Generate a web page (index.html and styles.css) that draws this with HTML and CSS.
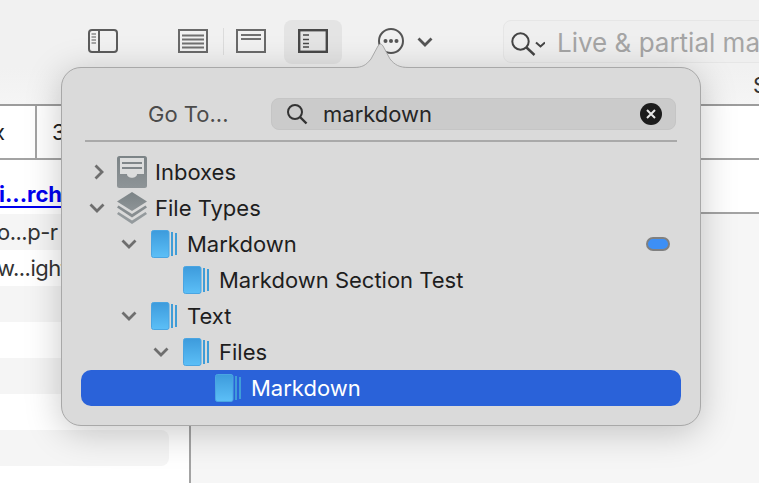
FILE: index.html
```html
<!DOCTYPE html>
<html lang="en">
<head>
    <meta charset="UTF-8">
    <title>Go To</title>
    <link rel="stylesheet" href="styles.css">
</head>
<body>
    <svg class="defs" width="0" height="0">
        <defs>
            <linearGradient id="blue" x1="0" y1="0" x2="0" y2="1">
                <stop offset="0" stop-color="#3d9bdc"/>
                <stop offset="1" stop-color="#5cbff7"/>
            </linearGradient>
            <linearGradient id="slate" x1="0" y1="0" x2="0" y2="1">
                <stop offset="0" stop-color="#7b8386"/>
                <stop offset="1" stop-color="#8e9497"/>
            </linearGradient>
            <symbol id="folder" viewBox="0 0 26 28">
                <rect x="0.5" y="0.5" width="17.5" height="27" rx="2" fill="url(#blue)" stroke="#4aa5e2"/>
                <rect x="20" y="2" width="2" height="24" fill="#3f9dd8"/>
                <rect x="24" y="3" width="2" height="22" fill="#3f9dd8"/>
            </symbol>
            <symbol id="chevron" viewBox="0 0 16 10">
                <path d="M1.5 1.5 L8 8 L14.5 1.5" fill="none" stroke="currentColor" stroke-width="2.8"/>
            </symbol>
        </defs>
    </svg>

    <header class="toolbar">
        <svg class="tool tool-sidebar" width="30" height="24" viewBox="0 0 30 24">
            <rect x="1" y="1" width="28" height="22" rx="3" fill="none" stroke="#5c5c5c" stroke-width="2"/>
            <path d="M11 1 V23" stroke="#5c5c5c" stroke-width="2"/>
            <path d="M3.5 5 H8 M3.5 8 H8 M3.5 11 H8 M3.5 14 H8" stroke="#8a8a8a" stroke-width="1.5"/>
        </svg>
        <svg class="tool tool-lines" width="30" height="24" viewBox="0 0 30 24">
            <rect x="1" y="1" width="28" height="22" fill="none" stroke="#6a6a6a" stroke-width="2"/>
            <path d="M4 6.5 H26 M4 10.5 H26 M4 14.5 H26 M4 18.5 H26" stroke="#707070" stroke-width="1.8"/>
        </svg>
        <span class="tool-sep"></span>
        <svg class="tool tool-preview" width="30" height="24" viewBox="0 0 30 24">
            <rect x="1" y="1" width="28" height="22" fill="none" stroke="#6a6a6a" stroke-width="2"/>
            <path d="M5 6 H25 M5 10 H25" stroke="#707070" stroke-width="1.8"/>
        </svg>
        <div class="tool-active">
            <svg width="30" height="24" viewBox="0 0 30 24">
                <rect x="1.2" y="1.2" width="27.6" height="21.6" fill="none" stroke="#484848" stroke-width="2.4"/>
                <path d="M5 6 H11 M5 10.5 H11 M5 14.5 H11 M5 18 H11" stroke="#484848" stroke-width="1.7"/>
            </svg>
        </div>
        <svg class="tool tool-more" width="28" height="28" viewBox="0 0 28 28">
            <circle cx="14" cy="14" r="12" fill="none" stroke="#555" stroke-width="2"/>
            <circle cx="8.5" cy="14" r="2" fill="#555"/>
            <circle cx="14" cy="14" r="2" fill="#555"/>
            <circle cx="19.5" cy="14" r="2" fill="#555"/>
        </svg>
        <svg class="tool tool-caret"><use href="#chevron"/></svg>
        <div class="toolbar-search">
            <svg width="34" height="28" viewBox="0 0 34 28">
                <circle cx="9.5" cy="13.5" r="8.2" fill="none" stroke="#444" stroke-width="2"/>
                <path d="M15.5 19.5 L23.5 27" stroke="#444" stroke-width="2.4"/>
                <path d="M25 14.5 L29.5 18.5 L34 14.5" fill="none" stroke="#444" stroke-width="2"/>
            </svg>
            <span class="search-hint">Live &amp; partial ma</span>
        </div>
    </header>

    <div class="table-head"><span>S</span></div>
    <div class="table-row">
        <div class="cell cell-first">x</div>
        <div class="cell">3</div>
    </div>

    <main class="content">
        <aside class="sidebar">
            <a class="side-link" href="#">i...rch</a>
            <div class="side-row">o...p-r</div>
            <div class="side-row">w...ight</div>
            <div class="side-row"></div>
            <div class="side-row"></div>
            <div class="side-row"></div>
            <div class="side-row"></div>
            <div class="side-row side-last"></div>
        </aside>
        <section class="pane">
            <div class="pane-row"></div>
        </section>
    </main>

    <div class="popover">
        <svg class="popover-arrow" width="56" height="26" viewBox="0 0 56 26">
            <path d="M0 24.5 C10 24.5 13 22 18 16 L25 3 Q27.5 -1 30 3 L37 16 C42 22 46 24.5 56 24.5 V26 H0 Z" fill="#dadada"/>
            <path d="M0 24.5 C10 24.5 13 22 18 16 L25 3 Q27.5 -1 30 3 L37 16 C42 22 46 24.5 56 24.5" fill="none" stroke="#a8a8a8"/>
        </svg>
        <div class="goto">
            <span class="goto-label">Go To...</span>
            <div class="goto-field">
                <svg width="22" height="22" viewBox="0 0 22 22">
                    <circle cx="9" cy="9" r="7" fill="none" stroke="#333" stroke-width="2"/>
                    <path d="M14 14 L20.5 20.5" stroke="#333" stroke-width="2.4"/>
                </svg>
                <span class="goto-text">markdown</span>
                <svg class="goto-clear" width="22" height="22" viewBox="0 0 22 22">
                    <circle cx="11" cy="11" r="11" fill="#1c1c1c"/>
                    <path d="M7 7 L15 15 M15 7 L7 15" stroke="#e8e8e8" stroke-width="2"/>
                </svg>
            </div>
        </div>
        <div class="divider"></div>
        <ul class="tree">
            <li class="row level-0">
                <svg class="chev chev-closed" width="10" height="16" viewBox="0 0 10 16"><path d="M1.5 1.5 L8 8 L1.5 14.5" fill="none" stroke="currentColor" stroke-width="2.8"/></svg>
                <svg class="ico-gray" width="30" height="32" viewBox="0 0 30 32">
                    <rect width="30" height="32" rx="2.5" fill="url(#slate)"/>
                    <path d="M3 2 H27 V18 H20 C20 23 10 23 10 18 H3 Z" fill="#dcdddd"/>
                    <path d="M5 7 H25 M5 12 H25" stroke="#7f8689" stroke-width="2"/>
                </svg>
                <span>Inboxes</span>
            </li>
            <li class="row level-0">
                <svg class="chev"><use href="#chevron"/></svg>
                <svg class="ico-gray" width="30" height="32" viewBox="0 0 30 32">
                    <path d="M15 0 L30 9.5 L15 19 L0 9.5 Z" fill="url(#slate)"/>
                    <path d="M1.5 13.5 L15 22 L28.5 13.5 L30 15.5 L15 25.5 L0 15.5 Z" fill="#878d90"/>
                    <path d="M1.5 20 L15 28.5 L28.5 20 L30 22 L15 32 L0 22 Z" fill="#949a9d"/>
                </svg>
                <span>File Types</span>
            </li>
            <li class="row level-1">
                <svg class="chev"><use href="#chevron"/></svg>
                <svg class="ico"><use href="#folder"/></svg>
                <span>Markdown</span>
                <span class="badge"></span>
            </li>
            <li class="row level-2">
                <span class="chev"></span>
                <svg class="ico"><use href="#folder"/></svg>
                <span>Markdown Section Test</span>
            </li>
            <li class="row level-1">
                <svg class="chev"><use href="#chevron"/></svg>
                <svg class="ico"><use href="#folder"/></svg>
                <span>Text</span>
            </li>
            <li class="row level-2">
                <svg class="chev"><use href="#chevron"/></svg>
                <svg class="ico"><use href="#folder"/></svg>
                <span>Files</span>
            </li>
            <li class="row level-3 selected">
                <span class="chev"></span>
                <svg class="ico"><use href="#folder"/></svg>
                <span>Markdown</span>
            </li>
        </ul>
    </div>
</body>
</html>
```
FILE: styles.css
```css
* {
    box-sizing: border-box;
}
html, body {
    height: 100%;
}
body {
    margin: 0;
    position: relative;
    overflow: hidden;
    display: flex;
    flex-direction: column;
    font-family: Inter, "Liberation Sans", sans-serif;
    font-size: 22px;
    color: #1e1e1e;
    background: #f6f6f6;
}
.defs {
    position: absolute;
}

/* toolbar */
.toolbar {
    flex: none;
    height: 68px;
    padding: 20px 0 0 88px;
    display: flex;
    align-items: flex-start;
    background: #f1f1f1;
    white-space: nowrap;
}
.tool {
    flex: none;
    margin-top: 9px;
}
.tool-lines {
    margin-left: 60px;
}
.tool-sep {
    flex: none;
    width: 1px;
    height: 27px;
    margin: 8px 12px 0 15px;
    background: #dcdcdc;
}
.tool-active {
    flex: none;
    width: 58px;
    height: 44px;
    margin-left: 18px;
    padding-top: 9px;
    display: flex;
    justify-content: center;
    background: #e4e4e4;
    border-radius: 8px;
}
.tool-more {
    margin: 7px 0 0 35px;
}
.tool-caret {
    width: 16px;
    height: 10px;
    margin: 17px 0 0 12px;
    color: #555;
}
.toolbar-search {
    flex: none;
    width: 320px;
    height: 43px;
    margin-left: 70px;
    padding: 0 0 0 7px;
    display: flex;
    align-items: center;
    gap: 12px;
    background: #efefef;
    border: 1px solid #e6e6e6;
    border-radius: 8px;
    font-size: 26px;
    color: #a5a5a5;
    overflow: hidden;
}
.search-hint {
    padding-top: 2px;
}

/* table behind the popover */
.table-head {
    flex: none;
    height: 38px;
    padding-left: 753px;
    background: linear-gradient(#f1f1f1, #f5f5f5);
    border-bottom: 2px solid #9c9c9c;
    line-height: 34px;
    color: #333;
}
.table-row {
    flex: none;
    height: 54px;
    display: flex;
    background: #fff;
    border-bottom: 2px solid #a3a3a3;
    line-height: 52px;
}
.cell {
    padding-left: 15px;
}
.cell-first {
    width: 37px;
    padding-left: 0;
    text-indent: -7px;
    border-right: 2px solid #a3a3a3;
    overflow: hidden;
}
.content {
    flex: 1;
    display: flex;
}
.sidebar {
    flex: none;
    width: 191px;
    padding-right: 20px;
    display: flex;
    flex-direction: column;
    background: #fff;
    border-right: 2px solid #a3a3a3;
}
.side-link {
    height: 54px;
    padding-top: 21px;
    margin-right: 100px;
    font-weight: 700;
    color: #0000ee;
    line-height: 27px;
    text-decoration: underline;
    text-decoration-thickness: 2px;
    text-underline-offset: 4px;
    text-indent: -1px;
}
.side-row {
    height: 36px;
    line-height: 37px;
    white-space: nowrap;
    color: #333;
    letter-spacing: -0.5px;
    text-indent: -3px;
}
.side-row:nth-of-type(odd) {
    background: #f5f5f5;
}
.side-last {
    border-radius: 0 8px 8px 0;
}
.pane {
    flex: 1;
}
.pane-row {
    height: 54px;
    background: #fff;
    border-bottom: 2px solid #a3a3a3;
}

/* popover */
.popover {
    position: absolute;
    left: 61px;
    top: 67px;
    width: 640px;
    height: 359px;
    padding: 30px 19px 0;
    background: #dadada;
    border: 1px solid #a8a8a8;
    border-radius: 20px;
    box-shadow: 0 6px 36px rgba(0, 0, 0, 0.22);
}
.popover-arrow {
    position: absolute;
    left: 291px;
    top: -25px;
}
.goto {
    display: flex;
    align-items: center;
}
.goto-label {
    width: 190px;
    padding-left: 67px;
    color: #4b4b4b;
}
.goto-field {
    width: 405px;
    height: 32px;
    padding: 0 13px 0 14px;
    display: flex;
    align-items: center;
    background: #cbcbcb;
    border: 1px solid #c5c5c5;
    border-radius: 8px;
}
.goto-text {
    margin-left: 15px;
    color: #262626;
}
.goto-clear {
    margin-left: auto;
}
.divider {
    height: 2px;
    margin: 10px 4px 12px;
    background: #a9a9a9;
}
.tree {
    margin: 0;
    padding: 0;
    list-style: none;
}
.row {
    height: 36px;
    display: flex;
    align-items: center;
    white-space: nowrap;
    border-radius: 10px;
}
.chev {
    flex: none;
    width: 16px;
    height: 10px;
    margin: 0 6px;
    color: #6e6e6e;
}
.chev-closed {
    width: 10px;
    height: 16px;
    margin: 0 7px 0 11px;
}
.ico-gray {
    flex: none;
    margin: 0 8px 0 6px;
}
.ico {
    flex: none;
    width: 26px;
    height: 28px;
    margin: 0 10px 0 8px;
}
.level-0 {
    padding-left: 2px;
}
.level-1 {
    padding-left: 34px;
}
.level-2 {
    padding-left: 66px;
}
.level-3 {
    padding-left: 98px;
}
.badge {
    width: 24px;
    height: 14px;
    margin: 0 11px 0 auto;
    background: #3d8ff5;
    border: 2px solid #808080;
    border-radius: 7px;
}
.selected {
    background: #2a62d9;
    color: #fff;
}
```
